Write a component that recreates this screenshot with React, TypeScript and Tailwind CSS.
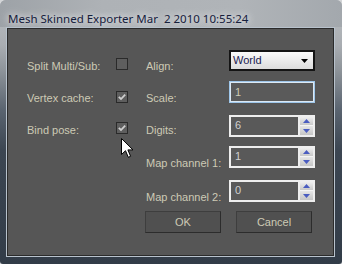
import React from "react";

const label = "font-['Liberation_Sans',Arial,sans-serif] text-[11px] leading-[13px] text-[#cdcab5] whitespace-nowrap";

function Check({ checked, mt }: { checked: boolean; mt: string }) {
  return (
    <div className={`w-[12px] h-[12px] shrink-0 border border-[#2a2a2a] bg-[#5e5e5e] flex items-center justify-center ${mt}`}>
      {checked && (
        <svg width="10" height="10" viewBox="0 0 10 10">
          <path d="M1.8 4.8 L4 7 L8.2 2.6" fill="none" stroke="#cfcfcf" strokeWidth="1.8" />
        </svg>
      )}
    </div>
  );
}

function Spinner({ value }: { value: string }) {
  return (
    <div className="w-[86px] h-[22px] border-2 border-[#eeeeee] bg-[#595959] flex">
      <div className={`flex-1 pl-[4px] pt-[2px] ${label} text-[#cfcfcf]`}>{value}</div>
      <div className="w-[15px] flex flex-col border-l-2 border-[#eeeeee]">
        <div className="h-[9px] bg-gradient-to-b from-[#eeeeee] to-[#c9c9c9] flex items-center justify-center border-b border-[#f4f4f4]">
          <svg width="7" height="4" viewBox="0 0 7 4"><path d="M0 4 L3.5 0 L7 4 Z" fill="#4a5cc0" /></svg>
        </div>
        <div className="flex-1 bg-gradient-to-b from-[#e6e6e6] to-[#c5c5c5] flex items-center justify-center">
          <svg width="7" height="4" viewBox="0 0 7 4"><path d="M0 0 L3.5 4 L7 0 Z" fill="#4a5cc0" /></svg>
        </div>
      </div>
    </div>
  );
}

export default function App() {
  return (
    <div className="w-[342px] h-[264px] bg-[#d4d6d8] overflow-hidden">
      <div className="relative w-[342px] h-[264px] rounded-t-[6px] rounded-b-[3px] overflow-hidden bg-[linear-gradient(to_bottom,#a6abb0_0px,#b3b7bb_20px,#a9adb2_45px,#8e949a_70px,#5a6470_110px,#3c4652_150px,#323c48_264px)] flex flex-col">
        <div className="h-[27px] shrink-0 pl-[8px] pt-[5px] bg-[linear-gradient(to_right,#9da2a7,#aeb2b6_30%,#b0b4b8_70%,#a3a8ad)]">
          <span className="font-['Noto_Sans',sans-serif] text-[11.5px] leading-[16px] text-[#16203c] whitespace-pre [text-shadow:0_0_6px_#e8eaec,0_0_10px_#e0e2e4]">
            {"Mesh Skinned Exporter Mar  2 2010 10:55:24"}
          </span>
        </div>
        <div className="flex-1 pl-[6px] pr-[7px] pb-[7px] flex">
          <div className="flex-1 border border-[#b8c2cc] flex">
            <div className="flex-1 border border-[#2b2b2b] bg-[#565656] flex flex-col">
              {/* Row A */}
              <div className="h-[20px] mt-[21px] flex items-start pl-[19px]">
                <div className={`w-[89px] mt-[10px] ${label}`}>Split Multi/Sub:</div>
                <Check checked={false} mt="mt-[8px]" />
                <div className={`w-[83px] ml-[18px] mt-[10px] ${label}`}>Align:</div>
                <div className="w-[86px] h-[21px] border-2 border-[#141414] bg-gradient-to-b from-[#fafafa] to-[#dcdcdc] flex items-center pl-[2px] pr-[5px]">
                  <span className="flex-1 font-['Liberation_Sans',Arial,sans-serif] text-[11px] text-[#1a1a50]">World</span>
                  <svg width="7" height="4" viewBox="0 0 7 4"><path d="M0 0 L7 0 L3.5 4 Z" fill="#000" /></svg>
                </div>
              </div>
              {/* Row B */}
              <div className="h-[22px] mt-[11px] flex items-start pl-[19px]">
                <div className={`w-[89px] mt-[11px] ${label}`}>Vertex cache:</div>
                <Check checked={true} mt="mt-[10px]" />
                <div className={`w-[83px] ml-[18px] mt-[11px] ${label}`}>Scale:</div>
                <div className={`w-[86px] h-[22px] border border-[#9ec6ea] shadow-[inset_0_0_0_1px_#dbe9f5] bg-[#5a5a5a] pl-[5px] flex items-center ${label} text-[#c2c8d4]`}>
                  1
                </div>
              </div>
              {/* Row C */}
              <div className="h-[22px] mt-[12px] flex items-start pl-[19px]">
                <div className={`w-[89px] mt-[9px] ${label}`}>Bind pose:</div>
                <Check checked={true} mt="mt-[7px]" />
                <div className={`w-[83px] ml-[18px] mt-[9px] ${label}`}>Digits:</div>
                <Spinner value="6" />
              </div>
              {/* Row D */}
              <div className="h-[22px] mt-[9px] flex items-start pl-[19px]">
                <div className="w-[89px]" />
                <div className="w-[12px]" />
                <div className={`w-[83px] ml-[18px] mt-[11px] ${label}`}>Map channel 1:</div>
                <Spinner value="1" />
              </div>
              {/* Row E */}
              <div className="h-[22px] mt-[12px] flex items-start pl-[19px]">
                <div className="w-[89px]" />
                <div className="w-[12px]" />
                <div className={`w-[83px] ml-[18px] mt-[11px] ${label}`}>Map channel 2:</div>
                <Spinner value="0" />
              </div>
              {/* Buttons */}
              <div className="h-[22px] mt-[9px] flex pl-[137px] gap-[15px]">
                <div className={`w-[76px] h-[22px] border border-[#2c2c2c] border-t-[#3e3e3e] border-l-[#3e3e3e] bg-[#505050] flex items-center justify-center ${label}`}>OK</div>
                <div className={`w-[76px] h-[22px] border border-[#2c2c2c] border-t-[#3e3e3e] border-l-[#3e3e3e] bg-[#505050] flex items-center justify-center ${label}`}>Cancel</div>
              </div>
            </div>
          </div>
        </div>
        {/* mouse cursor */}
        <svg className="absolute left-[121px] top-[138px]" width="13" height="21" viewBox="0 0 13 21">
          <path d="M0.5 0.5 L0.5 16.5 L4.5 12.7 L7.3 19.3 L9.6 18.3 L6.9 11.9 L12 11.9 Z" fill="#ffffff" stroke="#000000" strokeWidth="1" strokeLinejoin="miter" />
        </svg>
      </div>
    </div>
  );
}
